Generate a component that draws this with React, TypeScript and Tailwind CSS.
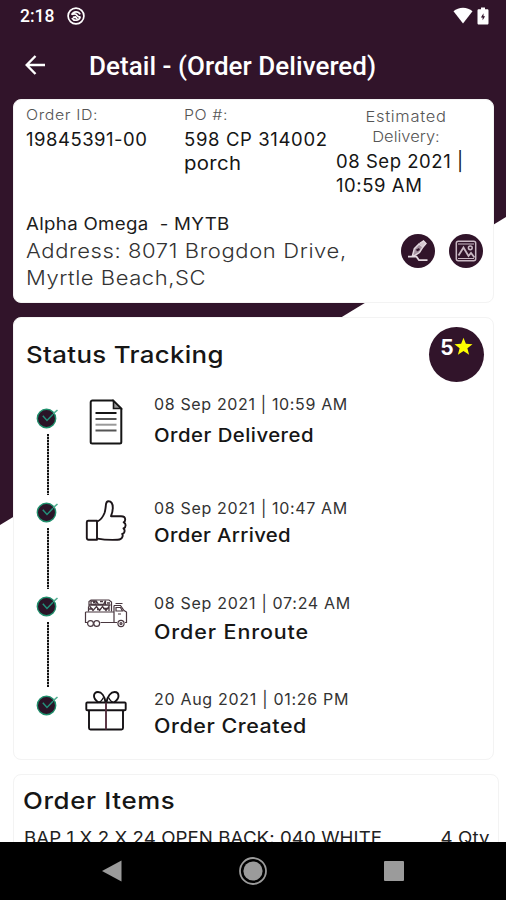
import { ReactNode } from "react";

const Marker = () => (
  <svg width="24" height="24" viewBox="0 0 24 24" fill="none" className="shrink-0">
    <circle cx="11.5" cy="12.5" r="9.2" fill="#2a1427" stroke="#1f8f6c" strokeWidth="1.4" />
    <path d="M7.8 9.8l4.2 4.6L18 8.2" stroke="#23907a" strokeWidth="1.5" />
    <path d="M18.3 7.6l4.2-3.6" stroke="#4fae90" strokeWidth="1.6" />
  </svg>
);

const DocIcon = () => (
  <svg width="34" height="46" viewBox="0 0 34 46" fill="none" stroke="#151515" strokeWidth="2">
    <path d="M3.5 1.5H24l8.3 8.2V43a1.5 1.5 0 0 1-1.5 1.5H3.2A1.5 1.5 0 0 1 1.7 43V3.2a1.7 1.7 0 0 1 1.8-1.7z" />
    <path d="M24.5 2v7.500H32z" fill="#999" strokeWidth="1.6" />
    <path d="M6.500 14h21" />
    <path d="M6.500 20h21M6.500 31.500h21" stroke="#555" />
    <path d="M6.500 25.700h21" stroke="#999" />
  </svg>
);

const ThumbIcon = () => (
  <svg width="42" height="42" viewBox="0 0 42 42" fill="none" stroke="#1c1519" strokeWidth="1.9" strokeLinejoin="round">
    <path d="M1.8 22.2c0-1 .6-1.5 1.5-1.5H12v19H3.5c-1 0-1.7-.6-1.7-1.6z" />
    <path d="M12.5 21.3c3.7-1.5 5.8-5.3 7-8.3.8-2.2 1-4.2 1.300-7.200.2-3 1-4.500 2.700-4.500 2.500 0 4.300 2.500 4.300 6.700 0 3.300-.8 5.500-1.800 8.200H36c2.600 0 4.200 1.300 4.200 3.300 0 1.400-.6 2.300-1.500 2.800 1.300.6 1.900 1.600 1.900 3 0 1.600-.9 2.700-2.100 3.200.8.6 1.200 1.500 1.100 2.500-.1 1.600-1 2.600-2.400 3 .5.700.6 1.500.4 2.300-.5 2.400-2.200 3.400-5.100 3.500-7 .3-13.500.1-20-1.200" />
  </svg>
);

const TruckIcon = () => (
  <svg width="44" height="29" viewBox="0 0 44 29" fill="none" stroke="#49373f" strokeWidth="1.2">
    <path d="M1.5 13H30v10.500H16.500M4 23.500H1.500V13M30 6.500h6.500l3.500 5 2.500 1.500v10.500h-1.500M33 23.500h-3V6.500" />
    <path d="M4.500 12.500V8l1-.8M5 7.500V2.500L7 1h18l2.500 2v9.500" />
    <path d="M32 8.500h4.500l2 3.500H32zM31.500 4.500h7M34 15h3" />
    <path d="M7 2h5v3.500H7zM12 1.500l2.500 4h5l2-4M16 2.500h3M21.500 2v4h5M5 6h21.500M6 7.500l3 4 3.500-4 3 4 3-4 3.500 4 3-4v4.500M5 10h4M13 10.500h4M19 9.500h5M9 3.500h2M23 4h3" strokeWidth="1.3" />
    <circle cx="6.5" cy="24.5" r="2.9" fill="white" />
    <circle cx="12.7" cy="24.5" r="2.9" fill="white" />
    <circle cx="37" cy="24.5" r="3.1" fill="white" />
    <circle cx="37" cy="24.5" r="1" />
  </svg>
);

const GiftIcon = () => (
  <svg width="42" height="42" viewBox="0 0 42 42" fill="none" stroke="#141114" strokeWidth="1.9">
    <rect x="1.3" y="12.5" width="39.4" height="7.8" rx="1" />
    <path d="M4 20.500V38a1.500 1.500 0 0 0 1.500 1.500h31A1.500 1.500 0 0 0 38 38V20.500" />
    <path d="M21 12.500v27" stroke="#55303f" />
    <path d="M20.500 12C19.500 6 16.500 2 13 2c-2.600 0-4 1.600-4 4s1.700 4.500 4.500 6.500M21.500 12C22.500 6 26 2 29.500 2c2.600 0 4 1.600 4 4s-1.700 4.500-4.500 6.500" />
    <path d="M13.500 12.300c2-.3 3.500-2 5-4.800M28.500 12.300c-2-.3-3.500-2-5-4.800" strokeWidth="1.3" />
  </svg>
);

type Step = {
  date: string;
  title: string;
  icon: ReactNode;
  row: string;
  line?: string;
  iconPad: string;
  textPad: string;
  dateStyle: string;
  titleStyle: string;
};

const steps: Step[] = [
  {
    date: "08 Sep 2021 | 10:59 AM",
    title: "Order Delivered",
    icon: <DocIcon />,
    row: "h-[94px]",
    line: "h-[61px]",
    iconPad: "pt-[8px]",
    textPad: "pt-px",
    dateStyle: "tracking-[0.65px] mb-[7px]",
    titleStyle: "text-[18.5px] tracking-[0.42px]",
  },
  {
    date: "08 Sep 2021 | 10:47 AM",
    title: "Order Arrived",
    icon: <ThumbIcon />,
    row: "h-[94px]",
    line: "h-[61px]",
    iconPad: "pt-[15px]",
    textPad: "pt-[11px]",
    dateStyle: "tracking-[0.66px] mb-[3px]",
    titleStyle: "text-[18.5px] tracking-[0.31px]",
  },
  {
    date: "08 Sep 2021 | 07:24 AM",
    title: "Order Enroute",
    icon: <TruckIcon />,
    row: "h-[99px]",
    line: "h-[65px]",
    iconPad: "pt-[20px]",
    textPad: "pt-[12px]",
    dateStyle: "tracking-[0.7px] mb-[5px]",
    titleStyle: "text-[19.5px] tracking-[0.81px]",
  },
  {
    date: "20 Aug 2021 | 01:26 PM",
    title: "Order Created",
    icon: <GiftIcon />,
    row: "h-[60px]",
    iconPad: "pt-[12px]",
    textPad: "pt-[9px]",
    dateStyle: "tracking-[0.7px] mb-[3px]",
    titleStyle: "text-[19.5px] tracking-[0.5px]",
  },
];

const StatusBar = () => (
  <div className="flex h-8 shrink-0 items-center justify-between pl-5 pr-[17px] text-white">
    <div className="flex items-center gap-[13px]">
      <span className="font-['Roboto',sans-serif] text-[17.5px] font-medium leading-8">2:18</span>
      <svg width="18" height="18" viewBox="0 0 18 18" fill="none" stroke="white" className="-mt-px">
        <circle cx="9" cy="9" r="7.9" strokeWidth="1.7" />
        <path d="M4.8 7.8A4.600 4.600 0 0 1 13.200 7.400M13.200 10.200A4.600 4.600 0 0 1 4.900 11" strokeWidth="1.6" />
        <path d="M4.600 7.500c3-1.200 4.500-.7 5.800 1.200 1 1.300 1.800 1.500 3.200 1.200M6 10.500l2.500-.5 1.800 2" strokeWidth="1.8" />
      </svg>
    </div>
    <div className="flex items-center gap-1">
      <svg width="20" height="17" viewBox="0 0 20 17" fill="white" className="-mt-px">
        <path d="M10 16.500L.5 4.300C3 2 6.500.8 10 .8s7 1.200 9.500 3.500z" />
      </svg>
      <svg width="12" height="18" viewBox="0 0 12 18" className="-mt-px">
        <path fill="white" d="M4 .5h4v1.800h2.200c.8 0 1.300.5 1.300 1.300v12.600c0 .8-.5 1.300-1.300 1.300H1.800c-.8 0-1.300-.5-1.300-1.300V3.600c0-.8.5-1.300 1.300-1.300H4z" />
        <path fill="#31142a" d="M6.500 6.200L3.900 10.400h1.700v2.800L8.100 9.200H6.500z" />
      </svg>
    </div>
  </div>
);

const Header = () => (
  <header className="flex h-[67px] shrink-0 items-center gap-[44px] pl-[25px] text-white">
    <svg width="20" height="20" viewBox="0 0 20 20" fill="none" stroke="white" strokeWidth="2.4" className="-mt-[2px]">
      <path d="M20 10H1.800M10.500 1L1.700 10l8.800 9" />
    </svg>
    <h1 className="whitespace-nowrap pt-px font-['Roboto',sans-serif] text-[26px] font-medium leading-8 tracking-[0.04px]">
      Detail - (Order Delivered)
    </h1>
  </header>
);

const OrderCard = () => (
  <section className="ml-[13px] h-[204px] w-[481px] shrink-0 rounded-[8px] border border-[#f3f3f3] bg-white pl-3 pt-[5px]">
    <div className="flex h-[107px] whitespace-nowrap text-[18.5px] leading-6 text-[#151515]">
      <div className="w-[158px]">
        <p className="mb-[2px] origin-left scale-x-110 text-[14.5px] font-light leading-5 tracking-[0.53px] text-[#555]">
          Order ID:
        </p>
        <p className="tracking-[0.5px]">19845391-00</p>
      </div>
      <div className="w-[152px]">
        <p className="mb-[2px] origin-left scale-x-110 text-[14.5px] font-light leading-5 tracking-[0.5px] text-[#555]">
          PO #:
        </p>
        <p className="tracking-[0.63px]">598 CP 314002</p>
        <p className="origin-left scale-x-110 tracking-[0.3px]">porch</p>
      </div>
      <div className="w-[140px] pt-[2px]">
        <div className="mb-[2px] scale-x-110 text-center text-[15px] font-light leading-5 text-[#555]">
          <p className="tracking-[0.63px]">Estimated</p>
          <p>Delivery:</p>
        </div>
        <p className="tracking-[0.54px]">08 Sep 2021 |</p>
        <p className="tracking-[0.56px]">10:59 AM</p>
      </div>
    </div>
    <div className="flex">
      <div className="w-[375px] whitespace-pre">
        <p className="mb-[2px] origin-left scale-x-110 text-[17px] leading-6 tracking-[0.27px] text-[#1c1c1c]">
          {"Alpha Omega  - MYTB"}
        </p>
        <p className="origin-left scale-x-110 text-[20px] font-light leading-[27px] tracking-[0.55px] text-[#333]">
          Address: 8071 Brogdon Drive,
        </p>
        <p className="origin-left scale-x-110 text-[20px] font-light leading-[27px] tracking-[0.5px] text-[#333]">
          Myrtle Beach,SC
        </p>
      </div>
      <div className="flex gap-[14px] pt-[22px]">
        <div className="flex size-[34px] items-center justify-center rounded-full bg-[#31142a]">
          <svg width="22" height="24" viewBox="0 0 22 24" fill="none" stroke="#e4d9e0" strokeWidth="1.4">
            <path d="M5.500 16.500l1.800-6.800L12 5l4 3-3.500 5.500-5 3.200z" fill="#a592a0" />
            <path d="M12.500 4.500L16.500 2l2.500 2.500-3 3.500" fill="#d5c8d0" />
            <path d="M9.500 11.500l3-1.500" stroke="#31142a" strokeWidth="2" />
            <path d="M1 17.700h8.500l2.500 3.500h8.500" strokeWidth="1.8" />
          </svg>
        </div>
        <div className="flex size-[34px] items-center justify-center rounded-full bg-[#31142a]">
          <svg width="22" height="22" viewBox="0 0 22 22" fill="none" stroke="#c9b9c4" strokeWidth="1.5">
            <rect x="1.3" y="1.3" width="19.4" height="19.4" rx="2" />
            <path d="M3 4h16" strokeWidth="1" />
            <path d="M3.500 15.500l5-8 5 8.500 2.500-3 3.500 4.500" strokeWidth="1.8" />
            <circle cx="15.3" cy="7.8" r="1.9" />
            <path d="M3 18.500h16" strokeWidth="1" />
          </svg>
        </div>
      </div>
    </div>
  </section>
);

const StatusCard = () => (
  <section className="ml-[13px] h-[443px] w-[481px] shrink-0 rounded-[8px] border border-[#f3f3f3] bg-white pl-3">
    <div className="flex h-[73px] items-center justify-between pr-[9px]">
      <h2 className="origin-left scale-x-110 text-[23.5px] font-medium tracking-[0.3px] text-[#161616]">
        Status Tracking
      </h2>
      <div className="-mt-px flex size-[55px] justify-center rounded-full bg-[#31142a] pt-[9px] text-white">
        <span className="text-[21px] font-bold leading-6">5</span>
        <svg width="19" height="19" viewBox="0 0 24 24" fill="#ffff00" className="mt-px">
          <path d="M12 .8l3 7.800 8.400.4-6.500 5.200 2.200 8.100L12 17.700l-7.100 4.600 2.200-8.100L.6 9l8.400-.4z" />
        </svg>
      </div>
    </div>
    {steps.map((step) => (
      <div key={step.title} className={`flex ${step.row}`}>
        <div className="flex w-[46px] flex-col items-center gap-[4px] pr-[5px] pt-[15px]">
          <Marker />
          {step.line && (
            <div
              className={`ml-[2px] w-[2px] shrink-0 bg-[repeating-linear-gradient(to_bottom,#111_0,#111_2px,#aaa_2px,#aaa_3px)] ${step.line}`}
            />
          )}
        </div>
        <div className={`flex w-[67px] justify-center ${step.iconPad}`}>
          <div>{step.icon}</div>
        </div>
        <div className={`whitespace-nowrap pl-[15px] leading-6 ${step.textPad}`}>
          <p className={`text-[16px] text-[#333] ${step.dateStyle}`}>{step.date}</p>
          <p className={`w-fit origin-left scale-x-110 font-medium text-[#161616] ${step.titleStyle}`}>{step.title}</p>
        </div>
      </div>
    ))}
  </section>
);

const ItemsCard = () => (
  <section className="ml-[13px] h-[120px] w-[486px] shrink-0 rounded-[8px] border border-[#f3f3f3] bg-white pl-[9px] pr-[8px] pt-[10px]">
    <h2 className="w-fit origin-left scale-x-110 text-[23.5px] font-medium leading-8 tracking-[0.58px] text-[#161616]">
      Order Items
    </h2>
    <div className="flex justify-between whitespace-nowrap pl-px pt-[9px] text-[17px] leading-6 text-[#222]">
      <span className="origin-left scale-x-110 tracking-[0.05px]">BAP 1 X 2 X 24 OPEN BACK: 040 WHITE</span>
      <span className="origin-right scale-x-110 tracking-[0.07px]">4 Qty</span>
    </div>
  </section>
);

const NavBar = () => (
  <nav className="flex h-[58px] shrink-0 items-center justify-between bg-black pl-[102px] pr-[102px]">
    <svg width="20" height="22" viewBox="0 0 20 22" fill="#9b9b9b">
      <path d="M0 11L19.500.5v21z" />
    </svg>
    <svg width="28" height="28" viewBox="0 0 28 28">
      <circle cx="14" cy="14" r="13" fill="none" stroke="#9b9b9b" strokeWidth="1.8" />
      <circle cx="14" cy="14" r="9.6" fill="#9b9b9b" />
    </svg>
    <div className="size-[20px] rounded-[1px] bg-[#9b9b9b]" />
  </nav>
);

export default function App() {
  return (
    <div className="relative flex h-[900px] w-[506px] flex-col overflow-hidden bg-white font-['Inter',sans-serif]">
      <div className="absolute inset-0 bg-[#31142a] [clip-path:polygon(0_0,506px_0,506px_217px,0_525px)]" />
      <div className="relative flex h-[842px] flex-col overflow-hidden">
        <StatusBar />
        <Header />
        <main className="flex flex-col gap-[14px]">
          <OrderCard />
          <StatusCard />
          <ItemsCard />
        </main>
      </div>
      <NavBar />
    </div>
  );
}
